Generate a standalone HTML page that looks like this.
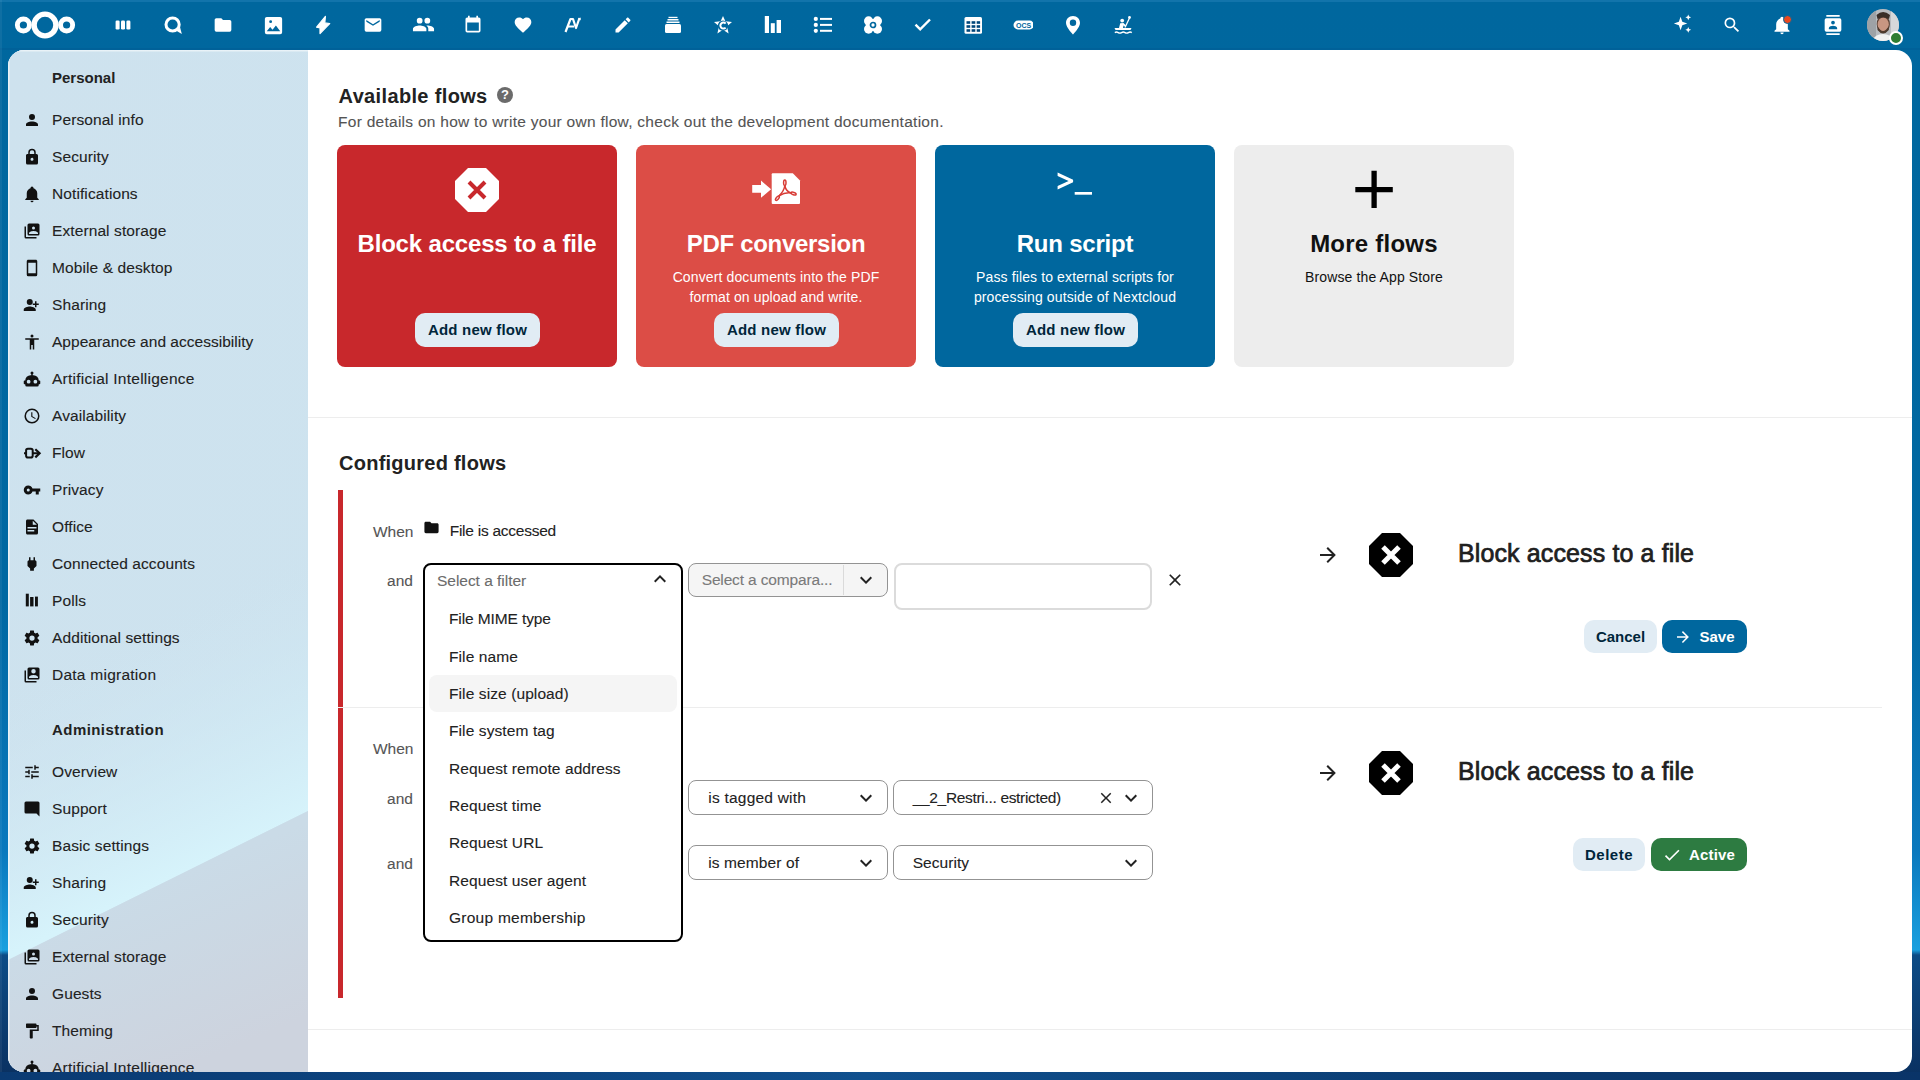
<!DOCTYPE html>
<html><head><meta charset="utf-8"><style>
*{box-sizing:border-box;margin:0;padding:0}
html,body{width:1920px;height:1080px;overflow:hidden}
body{position:relative;font-family:"Liberation Sans",sans-serif;font-size:15px;color:#222;background:#00679e}
.abs{position:absolute}
.t{position:absolute;white-space:nowrap;line-height:1}
#bg{position:absolute;left:0;top:0;width:1920px;height:1080px;
 background:linear-gradient(180deg,#00679e 0px,#0068a2 600px,#0a78bd 850px,#1aa0df 950px,#0d4c86 955px,#0a3060 1080px)}
#app{position:absolute;left:8px;top:50px;width:1904px;height:1022px;border-radius:16px;overflow:hidden;background:#fff}
#inner{position:absolute;left:-8px;top:-50px;width:1920px;height:1080px}
#nav{position:absolute;left:8px;top:50px;width:300px;height:1022px;background:#cde2ef;overflow:hidden}
.ni{font-size:15px;color:#222;letter-spacing:.3px}
.nh{font-weight:700;font-size:15px;color:#222;letter-spacing:.2px}
.sep{position:absolute;height:1px;background:#ededed}
.card{position:absolute;top:145px;width:280px;height:222px;border-radius:8px}
.ctitle{font-weight:700;font-size:24px;color:#fff;text-align:center;left:0;width:280px}
.csub{font-size:13.5px;color:#fff;text-align:center;left:0;width:280px;line-height:20px;white-space:normal}
.btn{position:absolute;height:34px;border-radius:10px;font-weight:700;font-size:15px;line-height:34px;text-align:center;white-space:nowrap}
.btnl{background:#e1ecf4;color:#00263b}
.lbl{color:#555;font-size:15px;letter-spacing:.3px}
.sel{position:absolute;border:1px solid #8f8f8f;border-radius:8px;background:#fff}
.opt{font-size:15px;color:#222;letter-spacing:.3px}
</style></head><body>
<div id="bg"></div>
<svg class="abs" style="left:10px;top:5px;width:70px;height:40px" viewBox="0 0 70 40"><circle cx="35" cy="20" r="10.9" fill="none" stroke="#fff" stroke-width="5.4"/><circle cx="13.4" cy="20" r="6.05" fill="none" stroke="#fff" stroke-width="4.9"/><circle cx="56.6" cy="20" r="6.05" fill="none" stroke="#fff" stroke-width="4.9"/></svg>
<svg class="abs" style="left:113px;top:15px;width:20px;height:20px" viewBox="0 0 20 20"><rect x="2.6" y="5.5" width="4" height="9" rx="1.3" fill="#fff"/><rect x="8" y="5.5" width="4" height="9" rx="1.3" fill="#fff"/><rect x="13.4" y="5.5" width="4" height="9" rx="1.3" fill="#fff"/></svg>
<svg class="abs" style="left:163px;top:15px;width:20px;height:20px" viewBox="0 0 20 20"><circle cx="9.6" cy="9.5" r="6.6" fill="none" stroke="#fff" stroke-width="3"/><path d="M12.5 15.2 L18.8 19 L17.2 12.8Z" fill="#fff"/></svg>
<svg class="abs" style="left:213px;top:15px;width:20px;height:20px" viewBox="0 0 24 24"><path fill="#fff" d="M10,4H4C2.89,4 2,4.89 2,6V18A2,2 0 0,0 4,20H20A2,2 0 0,0 22,18V8C22,6.89 21.1,6 20,6H12L10,4Z"/></svg>
<svg class="abs" style="left:261.5px;top:13.5px;width:23px;height:23px" viewBox="0 0 24 24"><path fill="#fff" d="M19,3H5A2,2 0 0,0 3,5V19A2,2 0 0,0 5,21H19A2,2 0 0,0 21,19V5A2,2 0 0,0 19,3M9,6.5A1.5,1.5 0 0,1 10.5,8A1.5,1.5 0 0,1 9,9.5A1.5,1.5 0 0,1 7.5,8A1.5,1.5 0 0,1 9,6.5M5,18L8.5,13.5L11,16.5L14.5,12L19,18H5Z"/></svg>
<svg class="abs" style="left:313px;top:15px;width:20px;height:20px" viewBox="0 0 20 20"><path d="M12.4 1.4 L3.6 12.2 L7 12.8 L7 18.6 L16.7 8.5 L11.8 7.9 Z" fill="#fff" stroke="#fff" stroke-width="1.2" stroke-linejoin="round"/></svg>
<svg class="abs" style="left:363px;top:15px;width:20px;height:20px" viewBox="0 0 24 24"><path fill="#fff" d="M20,8L12,13L4,8V6L12,11L20,6M20,4H4C2.89,4 2,4.89 2,6V18A2,2 0 0,0 4,20H20A2,2 0 0,0 22,18V6C22,4.89 21.1,4 20,4Z"/></svg>
<svg class="abs" style="left:411.5px;top:13px;width:23px;height:23px" viewBox="0 0 24 24"><path fill="#fff" d="M16,13C15.71,13 15.38,13 15.03,13.05C16.19,13.89 17,15 17,16.5V19H23V16.5C23,14.17 18.33,13 16,13M8,13C5.67,13 1,14.17 1,16.5V19H15V16.5C15,14.17 10.33,13 8,13M8,11A3,3 0 0,0 11,8A3,3 0 0,0 8,5A3,3 0 0,0 5,8A3,3 0 0,0 8,11M16,11A3,3 0 0,0 19,8A3,3 0 0,0 16,5A3,3 0 0,0 13,8A3,3 0 0,0 16,11Z"/></svg>
<svg class="abs" style="left:463px;top:15px;width:20px;height:20px" viewBox="0 0 24 24"><path fill="#fff" d="M19,19H5V9H19M16,1V3H8V1H6V3H5C3.89,3 3,3.89 3,5V19A2,2 0 0,0 5,21H19A2,2 0 0,0 21,19V5C21,3.89 20.1,3 19,3H18V1"/></svg>
<svg class="abs" style="left:513px;top:15px;width:20px;height:20px" viewBox="0 0 24 24"><path fill="#fff" d="M12,21.35L10.55,20.03C5.4,15.36 2,12.27 2,8.5C2,5.41 4.42,3 7.5,3C9.24,3 10.91,3.81 12,5.08C13.09,3.81 14.76,3 16.5,3C19.58,3 22,5.41 22,8.5C22,12.27 18.6,15.36 13.45,20.03L12,21.35Z"/></svg>
<svg class="abs" style="left:563px;top:15px;width:20px;height:20px" viewBox="0 0 20 20"><path d="M2.5 17 L7.5 4 L10 4 L13 13 L16.5 3" fill="none" stroke="#fff" stroke-width="2.2" stroke-linejoin="round"/><path d="M5 11.5 H11" stroke="#fff" stroke-width="2"/><path d="M15 3.5 L17.5 2.5 L17.8 5.5" fill="#fff"/></svg>
<svg class="abs" style="left:613px;top:15px;width:20px;height:20px" viewBox="0 0 24 24"><path fill="#fff" d="M20.71,7.04C21.1,6.65 21.1,6 20.71,5.63L18.37,3.29C18,2.9 17.35,2.9 16.96,3.29L15.12,5.12L18.87,8.87M3,17.25V21H6.75L17.81,9.93L14.06,6.18L3,17.25Z"/></svg>
<svg class="abs" style="left:663px;top:15px;width:20px;height:20px" viewBox="0 0 20 20"><rect x="2" y="9" width="16" height="9" rx="1.5" fill="#fff"/><rect x="3.5" y="6.5" width="13" height="1.5" fill="#fff"/><rect x="4.5" y="4" width="11" height="1.5" fill="#fff"/><rect x="5.5" y="1.8" width="9" height="1.3" fill="#fff"/></svg>
<svg class="abs" style="left:713px;top:15px;width:20px;height:20px" viewBox="0 0 20 20"><path d="M10 1 L12.4 6.3 L19 7 L14 11.3 L15.6 18.5 L10 14.8 L4.4 18.5 L6 11.3 L1 7 L7.6 6.3 Z" fill="#fff"/><circle cx="10" cy="10.6" r="5.2" fill="#00679e"/><path d="M12.6 8.6 A3 3 0 1 0 12.6 12.6" fill="none" stroke="#fff" stroke-width="2"/></svg>
<svg class="abs" style="left:763px;top:15px;width:20px;height:20px" viewBox="0 0 20 20"><rect x="1.8" y="1" width="4.2" height="17" fill="#fff"/><rect x="7.8" y="8.2" width="4" height="9.8" fill="#fff"/><rect x="13.6" y="5" width="4.4" height="13" fill="#fff"/></svg>
<svg class="abs" style="left:813px;top:15px;width:20px;height:20px" viewBox="0 0 20 20"><g fill="#fff"><circle cx="2.8" cy="3.9" r="2.1"/><circle cx="2.8" cy="9.9" r="2.1"/><circle cx="2.8" cy="15.8" r="2.1"/><rect x="7" y="2.9" width="12" height="2"/><rect x="7" y="8.9" width="12" height="2"/><rect x="7" y="14.8" width="12" height="2"/></g></svg>
<svg class="abs" style="left:863px;top:15px;width:20px;height:20px" viewBox="0 0 20 20"><g fill="#fff"><circle cx="5.6" cy="5.9" r="4.6"/><circle cx="14.4" cy="5.9" r="4.6"/><circle cx="5.6" cy="14.1" r="4.6"/><circle cx="14.4" cy="14.1" r="4.6"/><rect x="3" y="4" width="14" height="12"/></g><circle cx="10" cy="10" r="2.5" fill="none" stroke="#00679e" stroke-width="1.7"/></svg>
<svg class="abs" style="left:913px;top:15px;width:20px;height:20px" viewBox="0 0 20 20"><path d="M2.5 9.6 L7.2 14.4 L17 4.5" fill="none" stroke="#fff" stroke-width="2.4"/></svg>
<svg class="abs" style="left:963px;top:15px;width:20px;height:20px" viewBox="0 0 20 20"><rect x="1.5" y="2" width="17.5" height="16.8" rx="1.5" fill="#fff"/><g fill="#00467a"><rect x="3.5" y="6.2" width="3.7" height="2.6"/><rect x="8.6" y="6.2" width="3.7" height="2.6"/><rect x="13.7" y="6.2" width="3.4" height="2.6"/><rect x="3.5" y="10.2" width="3.7" height="2.6"/><rect x="8.6" y="10.2" width="3.7" height="2.6"/><rect x="13.7" y="10.2" width="3.4" height="2.6"/><rect x="3.5" y="14.2" width="3.7" height="2.6"/><rect x="8.6" y="14.2" width="3.7" height="2.6"/><rect x="13.7" y="14.2" width="3.4" height="2.6"/></g></svg>
<svg class="abs" style="left:1013px;top:15px;width:20px;height:20px" viewBox="0 0 20 20"><rect x="0.5" y="5.6" width="20.5" height="8.8" rx="4.4" fill="#fff"/><text x="10.7" y="12.7" font-size="7" font-weight="700" text-anchor="middle" fill="#00679e" font-family="Liberation Sans">OCS</text></svg>
<svg class="abs" style="left:1063px;top:15px;width:20px;height:20px" viewBox="0 0 20 20"><path d="M10 1 C5.8 1 3 4.2 3 8 C3 12.5 10 19.5 10 19.5 C10 19.5 17 12.5 17 8 C17 4.2 14.2 1 10 1Z M10 4.6 A3.2 3.2 0 1 1 10 11 A3.2 3.2 0 1 1 10 4.6Z" fill="#fff" fill-rule="evenodd"/></svg>
<svg class="abs" style="left:1113px;top:15px;width:20px;height:20px" viewBox="0 0 20 20"><g fill="#fff"><circle cx="9.2" cy="5.6" r="1.9"/><path d="M1.5 13 H18.5 L17.5 15 H2.5Z"/><path d="M6 13 L7.2 8.2 L10.5 8 L13 10.5 L12 11.5 L10.5 10.5 L10 13Z"/><circle cx="16.5" cy="2.5" r="1.4"/></g><g fill="none" stroke="#fff" stroke-width="1.3"><path d="M16.5 3 L12 12.5"/><path d="M1.8 17.6 Q3.5 16.4 5.2 17.6 T8.6 17.6 T12 17.6 T15.4 17.6 T18.8 17.6"/></g></svg>
<svg class="abs" style="left:1671px;top:13px;width:23px;height:23px" viewBox="0 0 24 24"><path fill="#fff" d="M10,4L11.8,9.2L17,11L11.8,12.8L10,18L8.2,12.8L3,11L8.2,9.2Z M18,1.5L18.9,3.6L21,4.5L18.9,5.4L18,7.5L17.1,5.4L15,4.5L17.1,3.6Z M18,14.5L18.9,16.6L21,17.5L18.9,18.4L18,20.5L17.1,18.4L15,17.5L17.1,16.6Z"/></svg>
<svg class="abs" style="left:1722px;top:15px;width:20px;height:20px" viewBox="0 0 24 24"><path fill="#fff" d="M9.5,3A6.5,6.5 0 0,1 16,9.5C16,11.11 15.41,12.59 14.44,13.73L14.71,14H15.5L20.5,19L19,20.5L14,15.5V14.71L13.73,14.44C12.59,15.41 11.11,16 9.5,16A6.5,6.5 0 0,1 3,9.5A6.5,6.5 0 0,1 9.5,3M9.5,5C7,5 5,7 5,9.5C5,12 7,14 9.5,14C12,14 14,12 14,9.5C14,7 12,5 9.5,5Z"/></svg>
<svg class="abs" style="left:1772px;top:15px;width:20px;height:20px" viewBox="0 0 24 24"><path fill="#fff" d="M21,19V20H3V19L5,17V11C5,7.9 7.03,5.17 10,4.29C10,4.19 10,4.1 10,4A2,2 0 0,1 12,2A2,2 0 0,1 14,4C14,4.1 14,4.19 14,4.29C16.97,5.17 19,7.9 19,11V17L21,19M14,21A2,2 0 0,1 12,23A2,2 0 0,1 10,21"/></svg>
<div class="abs" style="left:1782.5px;top:15px;width:9px;height:9px;border-radius:50%;background:#e9481f;border:1.5px solid #00679e"></div>
<svg class="abs" style="left:1823px;top:15px;width:20px;height:20px" viewBox="0 0 24 24"><path fill="#fff" d="M20,0H4V2H20V0M4,24H20V22H4V24M20,4H4A2,2 0 0,0 2,6V18A2,2 0 0,0 4,20H20A2,2 0 0,0 22,18V6A2,2 0 0,0 20,4M12,6.75A2.25,2.25 0 0,1 14.25,9A2.25,2.25 0 0,1 12,11.25A2.25,2.25 0 0,1 9.75,9A2.25,2.25 0 0,1 12,6.75M17,17H7V15.5C7,13.83 10.33,13 12,13C13.67,13 17,13.83 17,15.5V17Z"/></svg>
<svg class="abs" style="left:1867px;top:9px;width:32px;height:32px" viewBox="0 0 32 32"><defs><clipPath id="av"><circle cx="16" cy="16" r="16"/></clipPath></defs><g clip-path="url(#av)"><rect width="32" height="32" fill="#b9bcc0"/><rect x="0" y="0" width="9" height="32" fill="#9ea2a6"/><rect x="24" y="0" width="8" height="32" fill="#d6d8da"/><ellipse cx="16.3" cy="15" rx="6.6" ry="9" fill="#5a4034"/><ellipse cx="16.2" cy="15.5" rx="5.6" ry="7" fill="#c89682"/><path d="M10.5 17 Q16 27 21.8 17 L21.8 21 Q16 28 10.5 21Z" fill="#4e3a2e"/><path d="M9.5 6 Q16 0 23 6 L22 10 Q16 6.5 10.5 10Z" fill="#3a2e28"/><path d="M5 32 Q8 25 16 25 Q24 25 27 32Z" fill="#f2f2f2"/></g></svg>
<div class="abs" style="left:1889px;top:31px;width:14px;height:14px;border-radius:50%;background:#2e7d32;border:2.2px solid #fff"></div>
<div class="abs" style="left:0;top:48px;width:1920px;height:2px;background:#005d96;opacity:.6"></div>
<div class="abs" style="left:0;top:0;width:1920px;height:1.5px;background:#1274ab"></div>
<div class="abs" style="left:0;top:0;width:1.5px;height:1072px;background:rgba(255,255,255,.06)"></div>
<div class="abs" style="left:0;top:1072px;width:1920px;height:8px;background:linear-gradient(90deg,#0a3a72 0%,#0c4480 25%,#10508e 45%,#0d4680 60%,#0a3a70 80%,#0a3468 100%)"></div>
<div id="app"><div id="inner">
<div id="nav"><div class="abs" style="left:-8px;top:-50px;width:1920px;height:1080px">
<svg class="abs" style="left:8px;top:50px;width:300px;height:1022px" viewBox="0 0 300 1022"><defs><linearGradient id="wv" gradientUnits="userSpaceOnUse" x1="40" y1="600" x2="150" y2="834"><stop offset="0" stop-color="#cde2ef" stop-opacity="0"/><stop offset="1" stop-color="#d6f3fb" stop-opacity="1"/></linearGradient><linearGradient id="wv2" gradientUnits="userSpaceOnUse" x1="150" y1="834" x2="220" y2="1000"><stop offset="0" stop-color="#cadbe7"/><stop offset="1" stop-color="#cdd3de"/></linearGradient><linearGradient id="wv0" x1="0" y1="0" x2="1" y2="1"><stop offset="0" stop-color="#cee2ee"/><stop offset="1" stop-color="#cde3ef"/></linearGradient></defs><rect x="0" y="0" width="300" height="1022" fill="url(#wv0)"/><path d="M0,500 L300,380 L300,761 L0,910 Z" fill="url(#wv)"/><path d="M0,910 L300,761 L300,1022 L0,1022 Z" fill="url(#wv2)"/></svg>
<div class="t " style="left:52px;top:70.20px;font-size:15px;color:#222;font-weight:700;letter-spacing:0px;">Personal</div>
<svg class="abs" style="left:23px;top:111.1px;width:18px;height:18px" viewBox="0 0 24 24"><path fill="#111" d="M12,4A4,4 0 0,1 16,8A4,4 0 0,1 12,12A4,4 0 0,1 8,8A4,4 0 0,1 12,4M12,14C16.42,14 20,15.79 20,18V20H4V18C4,15.79 7.58,14 12,14Z"/></svg>
<div class="t " style="left:52px;top:111.68px;font-size:15.5px;color:#222;font-weight:400;letter-spacing:0.09px;-webkit-text-stroke:0.1px #222;">Personal info</div>
<svg class="abs" style="left:23px;top:148.1px;width:18px;height:18px" viewBox="0 0 24 24"><path fill="#111" d="M12,17A2,2 0 0,0 14,15C14,13.89 13.1,13 12,13A2,2 0 0,0 10,15A2,2 0 0,0 12,17M18,8A2,2 0 0,1 20,10V20A2,2 0 0,1 18,22H6A2,2 0 0,1 4,20V10C4,8.89 4.9,8 6,8H7V6A5,5 0 0,1 12,1A5,5 0 0,1 17,6V8H18M12,3A3,3 0 0,0 9,6V8H15V6A3,3 0 0,0 12,3Z"/></svg>
<div class="t " style="left:52px;top:148.68px;font-size:15.5px;color:#222;font-weight:400;letter-spacing:0.1px;-webkit-text-stroke:0.1px #222;">Security</div>
<svg class="abs" style="left:23px;top:185.1px;width:18px;height:18px" viewBox="0 0 24 24"><path fill="#111" d="M21,19V20H3V19L5,17V11C5,7.9 7.03,5.17 10,4.29C10,4.19 10,4.1 10,4A2,2 0 0,1 12,2A2,2 0 0,1 14,4C14,4.1 14,4.19 14,4.29C16.97,5.17 19,7.9 19,11V17L21,19M14,21A2,2 0 0,1 12,23A2,2 0 0,1 10,21"/></svg>
<div class="t " style="left:52px;top:185.68px;font-size:15.5px;color:#222;font-weight:400;letter-spacing:0.1px;-webkit-text-stroke:0.1px #222;">Notifications</div>
<svg class="abs" style="left:23px;top:222.1px;width:18px;height:18px" viewBox="0 0 24 24"><path fill="#111" d="M4,6H2V20A2,2 0 0,0 4,22H18V20H4V6M20,2H8A2,2 0 0,0 6,4V16A2,2 0 0,0 8,18H20A2,2 0 0,0 22,16V4A2,2 0 0,0 20,2M14,6A2,2 0 0,1 16,8A2,2 0 0,1 14,10A2,2 0 0,1 12,8A2,2 0 0,1 14,6M20,16H8V15C8,13 12,12 14,12C16,12 20,13 20,15V16Z"/></svg>
<div class="t " style="left:52px;top:222.68px;font-size:15.5px;color:#222;font-weight:400;letter-spacing:0.1px;-webkit-text-stroke:0.1px #222;">External storage</div>
<svg class="abs" style="left:23px;top:259.1px;width:18px;height:18px" viewBox="0 0 24 24"><path fill="#111" d="M17,19H7V5H17M17,1H7C5.89,1 5,1.89 5,3V21A2,2 0 0,0 7,23H17A2,2 0 0,0 19,21V3C19,1.89 18.1,1 17,1Z"/></svg>
<div class="t " style="left:52px;top:259.68px;font-size:15.5px;color:#222;font-weight:400;letter-spacing:0.1px;-webkit-text-stroke:0.1px #222;">Mobile &amp; desktop</div>
<svg class="abs" style="left:23px;top:296.1px;width:18px;height:18px" viewBox="0 0 24 24"><path fill="#111" d="M9,14C6.33,14 1,15.33 1,18V20H17V18C17,15.33 11.67,14 9,14M18,10V7H16V10H13V12H16V15H18V12H21V10M9,12A4,4 0 0,0 13,8A4,4 0 0,0 9,4A4,4 0 0,0 5,8A4,4 0 0,0 9,12Z"/></svg>
<div class="t " style="left:52px;top:296.68px;font-size:15.5px;color:#222;font-weight:400;letter-spacing:0.1px;-webkit-text-stroke:0.1px #222;">Sharing</div>
<svg class="abs" style="left:23px;top:333.1px;width:18px;height:18px" viewBox="0 0 24 24"><path fill="#111" d="M12,2A2,2 0 0,1 14,4A2,2 0 0,1 12,6A2,2 0 0,1 10,4A2,2 0 0,1 12,2M21,9H15V22H13V16H11V22H9V9H3V7H21V9Z"/></svg>
<div class="t " style="left:52px;top:333.68px;font-size:15.5px;color:#222;font-weight:400;letter-spacing:0.02px;-webkit-text-stroke:0.1px #222;">Appearance and accessibility</div>
<svg class="abs" style="left:23px;top:370.1px;width:18px;height:18px" viewBox="0 0 24 24"><path fill="#111" d="M12,2A2,2 0 0,1 14,4C14,4.74 13.6,5.39 13,5.73V7H14A7,7 0 0,1 21,14H22A1,1 0 0,1 23,15V18A1,1 0 0,1 22,19H21V20A2,2 0 0,1 19,22H5A2,2 0 0,1 3,20V19H2A1,1 0 0,1 1,18V15A1,1 0 0,1 2,14H3A7,7 0 0,1 10,7H11V5.73C10.4,5.39 10,4.74 10,4A2,2 0 0,1 12,2M7.5,13A2.5,2.5 0 0,0 5,15.5A2.5,2.5 0 0,0 7.5,18A2.5,2.5 0 0,0 10,15.5A2.5,2.5 0 0,0 7.5,13M16.5,13A2.5,2.5 0 0,0 14,15.5A2.5,2.5 0 0,0 16.5,18A2.5,2.5 0 0,0 19,15.5A2.5,2.5 0 0,0 16.5,13Z"/></svg>
<div class="t " style="left:52px;top:370.68px;font-size:15.5px;color:#222;font-weight:400;letter-spacing:0.25px;-webkit-text-stroke:0.1px #222;">Artificial Intelligence</div>
<svg class="abs" style="left:23px;top:407.1px;width:18px;height:18px" viewBox="0 0 24 24"><path fill="#111" d="M12,20A8,8 0 0,0 20,12A8,8 0 0,0 12,4A8,8 0 0,0 4,12A8,8 0 0,0 12,20M12,2A10,10 0 0,1 22,12A10,10 0 0,1 12,22C6.47,22 2,17.5 2,12A10,10 0 0,1 12,2M12.5,7V12.25L17,14.92L16.25,16.15L11,13V7H12.5Z"/></svg>
<div class="t " style="left:52px;top:407.68px;font-size:15.5px;color:#222;font-weight:400;letter-spacing:0.1px;-webkit-text-stroke:0.1px #222;">Availability</div>
<svg class="abs" style="left:22px;top:443.1px;width:20px;height:20px" viewBox="0 0 20 20"><rect x="4.1" y="5.8" width="6.6" height="8.8" rx="1.8" fill="none" stroke="#111" stroke-width="2"/><path d="M2 10.2H4M10.7 10.2H16" stroke="#111" stroke-width="2"/><path d="M13.3 6.2 L17.6 10.2 L13.3 14.4" fill="none" stroke="#111" stroke-width="2.2"/></svg>
<div class="t " style="left:52px;top:444.68px;font-size:15.5px;color:#222;font-weight:400;letter-spacing:0.1px;-webkit-text-stroke:0.1px #222;">Flow</div>
<svg class="abs" style="left:23px;top:481.1px;width:18px;height:18px" viewBox="0 0 24 24"><path fill="#111" d="M7,14A2,2 0 0,1 5,12A2,2 0 0,1 7,10A2,2 0 0,1 9,12A2,2 0 0,1 7,14M12.65,10C11.83,7.67 9.61,6 7,6A6,6 0 0,0 1,12A6,6 0 0,0 7,18C9.61,18 11.83,16.33 12.65,14H17V18H21V14H23V10H12.65Z"/></svg>
<div class="t " style="left:52px;top:481.68px;font-size:15.5px;color:#222;font-weight:400;letter-spacing:0.1px;-webkit-text-stroke:0.1px #222;">Privacy</div>
<svg class="abs" style="left:23px;top:518.1px;width:18px;height:18px" viewBox="0 0 24 24"><path fill="#111" d="M13,9H18.5L13,3.5V9M6,2H14L20,8V20A2,2 0 0,1 18,22H6C4.89,22 4,21.1 4,20V4C4,2.89 4.89,2 6,2M15,18V16H6V18H15M18,14V12H6V14H18Z"/></svg>
<div class="t " style="left:52px;top:518.68px;font-size:15.5px;color:#222;font-weight:400;letter-spacing:0.1px;-webkit-text-stroke:0.1px #222;">Office</div>
<svg class="abs" style="left:23px;top:555.1px;width:18px;height:18px" viewBox="0 0 24 24"><path fill="#111" d="M16,7V3H14V7H10V3H8V7H8C7,7 6,8 6,9V14.5L9.5,18V21H14.5V18L18,14.5V9C18,8 17,7 16,7Z"/></svg>
<div class="t " style="left:52px;top:555.68px;font-size:15.5px;color:#222;font-weight:400;letter-spacing:0.1px;-webkit-text-stroke:0.1px #222;">Connected accounts</div>
<svg class="abs" style="left:24px;top:592.3000000000001px;width:16px;height:16px" viewBox="0 0 16 16"><g fill="#111"><rect x="1.8" y="1.7" width="3" height="12.7"/><rect x="6.1" y="5" width="3.4" height="9.4"/><rect x="11" y="4.6" width="2.9" height="9.8"/></g></svg>
<div class="t " style="left:52px;top:592.68px;font-size:15.5px;color:#222;font-weight:400;letter-spacing:0.1px;-webkit-text-stroke:0.1px #222;">Polls</div>
<svg class="abs" style="left:23px;top:629.1px;width:18px;height:18px" viewBox="0 0 24 24"><path fill="#111" d="M12,15.5A3.5,3.5 0 0,1 8.5,12A3.5,3.5 0 0,1 12,8.5A3.5,3.5 0 0,1 15.5,12A3.5,3.5 0 0,1 12,15.5M19.43,12.97C19.47,12.65 19.5,12.33 19.5,12C19.5,11.67 19.47,11.34 19.43,11L21.54,9.37C21.73,9.22 21.78,8.95 21.66,8.73L19.66,5.27C19.54,5.05 19.27,4.96 19.05,5.05L16.56,6.05C16.04,5.66 15.5,5.32 14.87,5.07L14.5,2.42C14.46,2.18 14.25,2 14,2H10C9.75,2 9.54,2.18 9.5,2.42L9.13,5.07C8.5,5.32 7.96,5.66 7.44,6.05L4.95,5.05C4.73,4.96 4.46,5.05 4.34,5.27L2.34,8.73C2.21,8.95 2.27,9.22 2.46,9.37L4.57,11C4.53,11.34 4.5,11.67 4.5,12C4.5,12.33 4.53,12.65 4.57,12.97L2.46,14.63C2.27,14.78 2.21,15.05 2.34,15.27L4.34,18.73C4.46,18.95 4.73,19.03 4.95,18.95L7.44,17.94C7.96,18.34 8.5,18.68 9.13,18.93L9.5,21.58C9.54,21.82 9.75,22 10,22H14C14.25,22 14.46,21.82 14.5,21.58L14.87,18.93C15.5,18.67 16.04,18.34 16.56,17.94L19.05,18.95C19.27,19.03 19.54,18.95 19.66,18.73L21.66,15.27C21.78,15.05 21.73,14.78 21.54,14.63L19.43,12.97Z"/></svg>
<div class="t " style="left:52px;top:629.68px;font-size:15.5px;color:#222;font-weight:400;letter-spacing:0.1px;-webkit-text-stroke:0.1px #222;">Additional settings</div>
<svg class="abs" style="left:23px;top:666.1px;width:18px;height:18px" viewBox="0 0 24 24"><path fill="#111" d="M4,6H2V20A2,2 0 0,0 4,22H18V20H4V6M20,2H8A2,2 0 0,0 6,4V16A2,2 0 0,0 8,18H20A2,2 0 0,0 22,16V4A2,2 0 0,0 20,2M14,4A3,3 0 0,1 17,7A3,3 0 0,1 14,10A3,3 0 0,1 11,7A3,3 0 0,1 14,4M20,16H8V15C8,13 12,11.9 14,11.9C16,11.9 20,13 20,15V16Z"/></svg>
<div class="t " style="left:52px;top:666.68px;font-size:15.5px;color:#222;font-weight:400;letter-spacing:0.25px;-webkit-text-stroke:0.1px #222;">Data migration</div>
<div class="t " style="left:52px;top:722.30px;font-size:15px;color:#222;font-weight:700;letter-spacing:0.44px;">Administration</div>
<svg class="abs" style="left:23px;top:762.8px;width:18px;height:18px" viewBox="0 0 24 24"><path fill="#111" d="M3,17V19H9V17H3M3,5V7H13V5H3M13,21V19H21V17H13V15H11V21H13M7,9V11H3V13H7V15H9V9H7M21,13V11H11V13H21M15,9H17V7H21V5H17V3H15V9Z"/></svg>
<div class="t " style="left:52px;top:764.38px;font-size:15.5px;color:#222;font-weight:400;letter-spacing:0.1px;-webkit-text-stroke:0.1px #222;">Overview</div>
<svg class="abs" style="left:23px;top:799.8px;width:18px;height:18px" viewBox="0 0 24 24"><path fill="#111" d="M4,2H20A2,2 0 0,1 22,4V22L18,18H4A2,2 0 0,1 2,16V4A2,2 0 0,1 4,2Z"/></svg>
<div class="t " style="left:52px;top:801.38px;font-size:15.5px;color:#222;font-weight:400;letter-spacing:0.1px;-webkit-text-stroke:0.1px #222;">Support</div>
<svg class="abs" style="left:23px;top:836.8px;width:18px;height:18px" viewBox="0 0 24 24"><path fill="#111" d="M12,15.5A3.5,3.5 0 0,1 8.5,12A3.5,3.5 0 0,1 12,8.5A3.5,3.5 0 0,1 15.5,12A3.5,3.5 0 0,1 12,15.5M19.43,12.97C19.47,12.65 19.5,12.33 19.5,12C19.5,11.67 19.47,11.34 19.43,11L21.54,9.37C21.73,9.22 21.78,8.95 21.66,8.73L19.66,5.27C19.54,5.05 19.27,4.96 19.05,5.05L16.56,6.05C16.04,5.66 15.5,5.32 14.87,5.07L14.5,2.42C14.46,2.18 14.25,2 14,2H10C9.75,2 9.54,2.18 9.5,2.42L9.13,5.07C8.5,5.32 7.96,5.66 7.44,6.05L4.95,5.05C4.73,4.96 4.46,5.05 4.34,5.27L2.34,8.73C2.21,8.95 2.27,9.22 2.46,9.37L4.57,11C4.53,11.34 4.5,11.67 4.5,12C4.5,12.33 4.53,12.65 4.57,12.97L2.46,14.63C2.27,14.78 2.21,15.05 2.34,15.27L4.34,18.73C4.46,18.95 4.73,19.03 4.95,18.95L7.44,17.94C7.96,18.34 8.5,18.68 9.13,18.93L9.5,21.58C9.54,21.82 9.75,22 10,22H14C14.25,22 14.46,21.82 14.5,21.58L14.87,18.93C15.5,18.67 16.04,18.34 16.56,17.94L19.05,18.95C19.27,19.03 19.54,18.95 19.66,18.73L21.66,15.27C21.78,15.05 21.73,14.78 21.54,14.63L19.43,12.97Z"/></svg>
<div class="t " style="left:52px;top:838.38px;font-size:15.5px;color:#222;font-weight:400;letter-spacing:0.1px;-webkit-text-stroke:0.1px #222;">Basic settings</div>
<svg class="abs" style="left:23px;top:873.8px;width:18px;height:18px" viewBox="0 0 24 24"><path fill="#111" d="M9,14C6.33,14 1,15.33 1,18V20H17V18C17,15.33 11.67,14 9,14M18,10V7H16V10H13V12H16V15H18V12H21V10M9,12A4,4 0 0,0 13,8A4,4 0 0,0 9,4A4,4 0 0,0 5,8A4,4 0 0,0 9,12Z"/></svg>
<div class="t " style="left:52px;top:875.38px;font-size:15.5px;color:#222;font-weight:400;letter-spacing:0.1px;-webkit-text-stroke:0.1px #222;">Sharing</div>
<svg class="abs" style="left:23px;top:910.8px;width:18px;height:18px" viewBox="0 0 24 24"><path fill="#111" d="M12,17A2,2 0 0,0 14,15C14,13.89 13.1,13 12,13A2,2 0 0,0 10,15A2,2 0 0,0 12,17M18,8A2,2 0 0,1 20,10V20A2,2 0 0,1 18,22H6A2,2 0 0,1 4,20V10C4,8.89 4.9,8 6,8H7V6A5,5 0 0,1 12,1A5,5 0 0,1 17,6V8H18M12,3A3,3 0 0,0 9,6V8H15V6A3,3 0 0,0 12,3Z"/></svg>
<div class="t " style="left:52px;top:912.38px;font-size:15.5px;color:#222;font-weight:400;letter-spacing:0.1px;-webkit-text-stroke:0.1px #222;">Security</div>
<svg class="abs" style="left:23px;top:947.8px;width:18px;height:18px" viewBox="0 0 24 24"><path fill="#111" d="M4,6H2V20A2,2 0 0,0 4,22H18V20H4V6M20,2H8A2,2 0 0,0 6,4V16A2,2 0 0,0 8,18H20A2,2 0 0,0 22,16V4A2,2 0 0,0 20,2M14,6A2,2 0 0,1 16,8A2,2 0 0,1 14,10A2,2 0 0,1 12,8A2,2 0 0,1 14,6M20,16H8V15C8,13 12,12 14,12C16,12 20,13 20,15V16Z"/></svg>
<div class="t " style="left:52px;top:949.38px;font-size:15.5px;color:#222;font-weight:400;letter-spacing:0.1px;-webkit-text-stroke:0.1px #222;">External storage</div>
<svg class="abs" style="left:23px;top:984.8px;width:18px;height:18px" viewBox="0 0 24 24"><path fill="#111" d="M12,4A4,4 0 0,1 16,8A4,4 0 0,1 12,12A4,4 0 0,1 8,8A4,4 0 0,1 12,4M12,14C16.42,14 20,15.79 20,18V20H4V18C4,15.79 7.58,14 12,14Z"/></svg>
<div class="t " style="left:52px;top:986.38px;font-size:15.5px;color:#222;font-weight:400;letter-spacing:0.1px;-webkit-text-stroke:0.1px #222;">Guests</div>
<svg class="abs" style="left:23px;top:1021.8px;width:18px;height:18px" viewBox="0 0 24 24"><path fill="#111" d="M18,4V3A1,1 0 0,0 17,2H5A1,1 0 0,0 4,3V7A1,1 0 0,0 5,8H17A1,1 0 0,0 18,7V6H19V10H9V21A1,1 0 0,0 10,22H12A1,1 0 0,0 13,21V12H21V4H18Z"/></svg>
<div class="t " style="left:52px;top:1023.38px;font-size:15.5px;color:#222;font-weight:400;letter-spacing:0.1px;-webkit-text-stroke:0.1px #222;">Theming</div>
<svg class="abs" style="left:23px;top:1058.8px;width:18px;height:18px" viewBox="0 0 24 24"><path fill="#111" d="M12,2A2,2 0 0,1 14,4C14,4.74 13.6,5.39 13,5.73V7H14A7,7 0 0,1 21,14H22A1,1 0 0,1 23,15V18A1,1 0 0,1 22,19H21V20A2,2 0 0,1 19,22H5A2,2 0 0,1 3,20V19H2A1,1 0 0,1 1,18V15A1,1 0 0,1 2,14H3A7,7 0 0,1 10,7H11V5.73C10.4,5.39 10,4.74 10,4A2,2 0 0,1 12,2M7.5,13A2.5,2.5 0 0,0 5,15.5A2.5,2.5 0 0,0 7.5,18A2.5,2.5 0 0,0 10,15.5A2.5,2.5 0 0,0 7.5,13M16.5,13A2.5,2.5 0 0,0 14,15.5A2.5,2.5 0 0,0 16.5,18A2.5,2.5 0 0,0 19,15.5A2.5,2.5 0 0,0 16.5,13Z"/></svg>
<div class="t " style="left:52px;top:1060.38px;font-size:15.5px;color:#222;font-weight:400;letter-spacing:0.25px;-webkit-text-stroke:0.1px #222;">Artificial Intelligence</div>
</div></div>
<div class="abs" style="left:8px;top:50px;width:300px;height:1022px;box-shadow:inset 1.5px 1.5px 0 rgba(255,255,255,.55)"></div>
<div class="t " style="left:338.6px;top:85.87px;font-size:20px;color:#222;font-weight:700;letter-spacing:0.35px;">Available flows</div>
<div class="abs" style="left:497px;top:87.3px;width:16px;height:16px;border-radius:50%;background:#6b6b6b;color:#fff;font-weight:700;font-size:13px;line-height:16.5px;text-align:center">?</div>
<div class="t " style="left:338px;top:114.28px;font-size:15.5px;color:#545454;font-weight:400;letter-spacing:0.27px;-webkit-text-stroke:0.1px #545454;">For details on how to write your own flow, check out the development documentation.</div>
<div class="card" style="left:337px;background:#c8282c"></div>
<div class="t " style="left:327.0px;width:300px;text-align:center;top:231.98px;font-size:24px;color:#fff;font-weight:700;letter-spacing:-0.17px;">Block access to a file</div>
<div class="btn btnl" style="left:415px;top:313px;width:125px;letter-spacing:.2px">Add new flow</div>
<div class="card" style="left:636px;background:#dc4d46"></div>
<div class="t " style="left:626.0px;width:300px;text-align:center;top:231.98px;font-size:24px;color:#fff;font-weight:700;letter-spacing:-0.3px;">PDF conversion</div>
<div class="t " style="left:626.0px;width:300px;text-align:center;top:270.45px;font-size:14px;color:#fff;font-weight:400;letter-spacing:0.12px;">Convert documents into the PDF</div>
<div class="t " style="left:626.0px;width:300px;text-align:center;top:290.45px;font-size:14px;color:#fff;font-weight:400;letter-spacing:0.12px;">format on upload and write.</div>
<div class="btn btnl" style="left:714px;top:313px;width:125px;letter-spacing:.2px">Add new flow</div>
<div class="card" style="left:935px;background:#00679e"></div>
<div class="t " style="left:925.0px;width:300px;text-align:center;top:231.98px;font-size:24px;color:#fff;font-weight:700;letter-spacing:-0.2px;">Run script</div>
<div class="t " style="left:925.0px;width:300px;text-align:center;top:270.45px;font-size:14px;color:#fff;font-weight:400;letter-spacing:0.12px;">Pass files to external scripts for</div>
<div class="t " style="left:925.0px;width:300px;text-align:center;top:290.45px;font-size:14px;color:#fff;font-weight:400;letter-spacing:0.12px;">processing outside of Nextcloud</div>
<div class="btn btnl" style="left:1013px;top:313px;width:125px;letter-spacing:.2px">Add new flow</div>
<div class="card" style="left:1234px;background:#ededed"></div>
<div class="t " style="left:1224.0px;width:300px;text-align:center;top:231.98px;font-size:24px;color:#111;font-weight:700;letter-spacing:0.24px;">More flows</div>
<div class="t " style="left:1224.0px;width:300px;text-align:center;top:270.45px;font-size:14px;color:#111;font-weight:400;letter-spacing:0.12px;">Browse the App Store</div>
<svg class="abs" style="left:455px;top:167.6px;width:44px;height:44px" viewBox="0 0 44 44"><path d="M13,0H31L44,13V31L31,44H13L0,31V13Z" fill="#fff"/><path d="M14 14L30 30M30 14L14 30" stroke="#c8282c" stroke-width="4"/></svg>
<svg class="abs" style="left:751px;top:172px;width:50px;height:34px" viewBox="0 0 50 34"><path d="M1.2 13H10V8.6L20.1 17.2L10 25.8V20.8H1.2Z" fill="#fff"/><path d="M21.7 1.3H41.8L49 8.6V30.9Q49 31.9 48 31.9H21.7Q20.7 31.9 20.7 30.9V2.3Q20.7 1.3 21.7 1.3Z" fill="#fff"/><g fill="none" stroke="#d83c36" stroke-width="1.5"><ellipse cx="33.8" cy="10.8" rx="1.2" ry="2.7"/><ellipse cx="42.6" cy="21.6" rx="2.6" ry="1.2" transform="rotate(18 42.6 21.6)"/><ellipse cx="26.4" cy="26.2" rx="1.2" ry="2.6" transform="rotate(40 26.4 26.2)"/><path d="M33.8 13.5 C33.5 17 30.5 21.5 27.6 24.4"/><path d="M33.8 13.5 C34.5 17.5 37 20 40.2 21"/><path d="M40.2 21 C35.5 20.4 31.5 21.6 28 23.8"/></g></svg>
<svg class="abs" style="left:1054px;top:170px;width:40px;height:28px" viewBox="0 0 40 28"><path d="M3.6 2.5L19.1 9.8V12.2L3.6 19.6V16.1L14.6 11L3.6 5.9Z" fill="#fff"/><rect x="20.7" y="22" width="17.3" height="2.7" fill="#fff"/></svg>
<svg class="abs" style="left:1354px;top:169px;width:40px;height:40px" viewBox="0 0 40 40"><path d="M20.1 1.8V39M1.3 20.6H38.8" stroke="#000" stroke-width="5.3"/></svg>
<div class="sep" style="left:308px;top:417px;width:1604px"></div>
<div class="t " style="left:339px;top:453.07px;font-size:20px;color:#222;font-weight:700;letter-spacing:0.25px;">Configured flows</div>
<div class="abs" style="left:338px;top:490px;width:5px;height:508px;background:#c8282c"></div>
<div class="sep" style="left:338px;top:707px;width:1544px"></div>
<div class="sep" style="left:308px;top:1029px;width:1604px"></div>
<div class="t " style="left:373px;top:524.18px;font-size:15.5px;color:#555;font-weight:400;letter-spacing:-0.05px;-webkit-text-stroke:0.1px #555;">When</div>
<svg class="abs" style="left:423px;top:519px;width:17px;height:17px" viewBox="0 0 24 24"><path fill="#111" d="M10,4H4C2.89,4 2,4.89 2,6V18A2,2 0 0,0 4,20H20A2,2 0 0,0 22,18V8C22,6.89 21.1,6 20,6H12L10,4Z"/></svg>
<div class="t " style="left:449.7px;top:523.38px;font-size:15.5px;color:#222;font-weight:400;letter-spacing:-0.25px;-webkit-text-stroke:0.1px #222;">File is accessed</div>
<div class="t " style="left:113px;width:300px;text-align:right;top:573.18px;font-size:15.5px;color:#555;font-weight:400;letter-spacing:0.05px;-webkit-text-stroke:0.1px #555;">and</div>
<div class="abs" style="left:688px;top:563px;width:200px;height:34px;border:1.7px solid #939393;border-radius:8px;background:#f5f5f5"></div>
<div class="abs" style="left:843px;top:565px;width:1px;height:30px;background:#dadada"></div>
<div class="t " style="left:701.7px;top:572.48px;font-size:15.5px;color:#7a7a7a;font-weight:400;letter-spacing:-0.15px;-webkit-text-stroke:0.1px #7a7a7a;">Select a compara...</div>
<svg class="abs" style="left:854px;top:568px;width:24px;height:24px" viewBox="0 0 24 24"><path fill="#222" d="M7.41,8.58L12,13.17L16.59,8.58L18,10L12,16L6,10L7.41,8.58Z"/></svg>
<div class="abs" style="left:894px;top:563px;width:258px;height:47px;border:2px solid #dbdbdb;border-radius:8px"></div>
<svg class="abs" style="left:1165px;top:570px;width:20px;height:20px" viewBox="0 0 24 24"><path fill="#222" d="M19,6.41L17.59,5L12,10.59L6.41,5L5,6.41L10.59,12L5,17.59L6.41,19L12,13.41L17.59,19L19,17.59L13.41,12L19,6.41Z"/></svg>
<svg class="abs" style="left:1316px;top:542.7px;width:24px;height:24px" viewBox="0 0 24 24"><path fill="#222" d="M4,11V13H16L10.5,18.5L11.92,19.92L19.84,12L11.92,4.08L10.5,5.5L16,11H4Z"/></svg>
<svg class="abs" style="left:1369px;top:532.6px;width:44px;height:44px" viewBox="0 0 44 44"><path d="M13,0H31L44,13V31L31,44H13L0,31V13Z" fill="#000"/><path d="M14 14L30 30M30 14L14 30" stroke="#fff" stroke-width="5"/></svg>
<div class="t " style="left:1458px;top:541.24px;font-size:25px;color:#222;font-weight:400;letter-spacing:0.12px;-webkit-text-stroke:0.7px #1a1a1a;">Block access to a file</div>
<div class="btn btnl" style="left:1584px;top:620px;width:73px;height:33px;line-height:33px">Cancel</div>
<div class="btn" style="left:1662px;top:620px;width:85px;height:33px;background:#00679e;color:#fff;line-height:33px;padding-left:25px">Save</div>
<svg class="abs" style="left:1674px;top:628px;width:18px;height:18px" viewBox="0 0 24 24"><path fill="#fff" d="M4,11V13H16L10.5,18.5L11.92,19.92L19.84,12L11.92,4.08L10.5,5.5L16,11H4Z"/></svg>
<div class="t " style="left:373px;top:741.28px;font-size:15.5px;color:#555;font-weight:400;letter-spacing:-0.05px;-webkit-text-stroke:0.1px #555;">When</div>
<div class="t " style="left:113px;width:300px;text-align:right;top:790.88px;font-size:15.5px;color:#555;font-weight:400;letter-spacing:0.05px;-webkit-text-stroke:0.1px #555;">and</div>
<div class="t " style="left:113px;width:300px;text-align:right;top:856.08px;font-size:15.5px;color:#555;font-weight:400;letter-spacing:0.05px;-webkit-text-stroke:0.1px #555;">and</div>
<div class="sel" style="left:688px;top:780px;width:200px;height:35px;border:1.7px solid #939393"></div>
<div class="sel" style="left:893px;top:780px;width:260px;height:35px;border:1.7px solid #939393"></div>
<div class="t " style="left:708.3px;top:789.58px;font-size:15.5px;color:#222;font-weight:400;letter-spacing:0.22px;-webkit-text-stroke:0.1px #222;">is tagged with</div>
<div class="t " style="left:912.7px;top:789.58px;font-size:15.5px;color:#222;font-weight:400;letter-spacing:-0.32px;-webkit-text-stroke:0.1px #222;">__2_Restri... estricted)</div>
<svg class="abs" style="left:854px;top:785.5px;width:24px;height:24px" viewBox="0 0 24 24"><path fill="#222" d="M7.41,8.58L12,13.17L16.59,8.58L18,10L12,16L6,10L7.41,8.58Z"/></svg>
<svg class="abs" style="left:1119px;top:785.5px;width:24px;height:24px" viewBox="0 0 24 24"><path fill="#222" d="M7.41,8.58L12,13.17L16.59,8.58L18,10L12,16L6,10L7.41,8.58Z"/></svg>
<svg class="abs" style="left:1097px;top:789px;width:18px;height:18px" viewBox="0 0 24 24"><path fill="#222" d="M19,6.41L17.59,5L12,10.59L6.41,5L5,6.41L10.59,12L5,17.59L6.41,19L12,13.41L17.59,19L19,17.59L13.41,12L19,6.41Z"/></svg>
<div class="sel" style="left:688px;top:845px;width:200px;height:35px;border:1.7px solid #939393"></div>
<div class="sel" style="left:893px;top:845px;width:260px;height:35px;border:1.7px solid #939393"></div>
<div class="t " style="left:708.3px;top:854.58px;font-size:15.5px;color:#222;font-weight:400;letter-spacing:0.1px;-webkit-text-stroke:0.1px #222;">is member of</div>
<div class="t " style="left:912.7px;top:854.58px;font-size:15.5px;color:#222;font-weight:400;letter-spacing:0.05px;-webkit-text-stroke:0.1px #222;">Security</div>
<svg class="abs" style="left:854px;top:850.5px;width:24px;height:24px" viewBox="0 0 24 24"><path fill="#222" d="M7.41,8.58L12,13.17L16.59,8.58L18,10L12,16L6,10L7.41,8.58Z"/></svg>
<svg class="abs" style="left:1119px;top:850.5px;width:24px;height:24px" viewBox="0 0 24 24"><path fill="#222" d="M7.41,8.58L12,13.17L16.59,8.58L18,10L12,16L6,10L7.41,8.58Z"/></svg>
<svg class="abs" style="left:1316px;top:760.5px;width:24px;height:24px" viewBox="0 0 24 24"><path fill="#222" d="M4,11V13H16L10.5,18.5L11.92,19.92L19.84,12L11.92,4.08L10.5,5.5L16,11H4Z"/></svg>
<svg class="abs" style="left:1369px;top:750.6px;width:44px;height:44px" viewBox="0 0 44 44"><path d="M13,0H31L44,13V31L31,44H13L0,31V13Z" fill="#000"/><path d="M14 14L30 30M30 14L14 30" stroke="#fff" stroke-width="5"/></svg>
<div class="t " style="left:1458px;top:759.24px;font-size:25px;color:#222;font-weight:400;letter-spacing:0.12px;-webkit-text-stroke:0.7px #1a1a1a;">Block access to a file</div>
<div class="btn btnl" style="left:1573px;top:838px;width:72px;height:33px;line-height:33px;letter-spacing:.5px">Delete</div>
<div class="btn" style="left:1651px;top:838px;width:96px;height:33px;background:#2d7b41;color:#fff;line-height:33px;padding-left:26px;letter-spacing:.2px">Active</div>
<svg class="abs" style="left:1662px;top:845px;width:20px;height:20px" viewBox="0 0 24 24"><path fill="#fff" d="M21,7L9,19L3.5,13.5L4.91,12.09L9,16.17L19.59,5.59L21,7Z"/></svg>
<div class="abs" style="left:423px;top:563px;width:260px;height:379px;border:2px solid #000;border-radius:8px;background:#fff"></div>
<div class="t " style="left:437px;top:572.68px;font-size:15.5px;color:#6b6b6b;font-weight:400;letter-spacing:-0.03px;-webkit-text-stroke:0.1px #6b6b6b;">Select a filter</div>
<svg class="abs" style="left:647.5px;top:567px;width:24px;height:24px" viewBox="0 0 24 24"><path fill="#222" d="M7.41,15.41L12,10.83L16.59,15.41L18,14L12,8L6,14L7.41,15.41Z"/></svg>
<div class="abs" style="left:429px;top:675px;width:248px;height:37px;border-radius:8px;background:#f5f5f5"></div>
<div class="t " style="left:449px;top:611.28px;font-size:15.5px;color:#222;font-weight:400;letter-spacing:-0.11px;-webkit-text-stroke:0.1px #222;">File MIME type</div>
<div class="t " style="left:449px;top:648.63px;font-size:15.5px;color:#222;font-weight:400;letter-spacing:0.1px;-webkit-text-stroke:0.1px #222;">File name</div>
<div class="t " style="left:449px;top:685.98px;font-size:15.5px;color:#222;font-weight:400;letter-spacing:0.1px;-webkit-text-stroke:0.1px #222;">File size (upload)</div>
<div class="t " style="left:449px;top:723.33px;font-size:15.5px;color:#222;font-weight:400;letter-spacing:0.1px;-webkit-text-stroke:0.1px #222;">File system tag</div>
<div class="t " style="left:449px;top:760.68px;font-size:15.5px;color:#222;font-weight:400;letter-spacing:0.09px;-webkit-text-stroke:0.1px #222;">Request remote address</div>
<div class="t " style="left:449px;top:798.03px;font-size:15.5px;color:#222;font-weight:400;letter-spacing:0.1px;-webkit-text-stroke:0.1px #222;">Request time</div>
<div class="t " style="left:449px;top:835.38px;font-size:15.5px;color:#222;font-weight:400;letter-spacing:0.1px;-webkit-text-stroke:0.1px #222;">Request URL</div>
<div class="t " style="left:449px;top:872.73px;font-size:15.5px;color:#222;font-weight:400;letter-spacing:0.1px;-webkit-text-stroke:0.1px #222;">Request user agent</div>
<div class="t " style="left:449px;top:910.08px;font-size:15.5px;color:#222;font-weight:400;letter-spacing:0.25px;-webkit-text-stroke:0.1px #222;">Group membership</div>
</div></div>
</body></html>
